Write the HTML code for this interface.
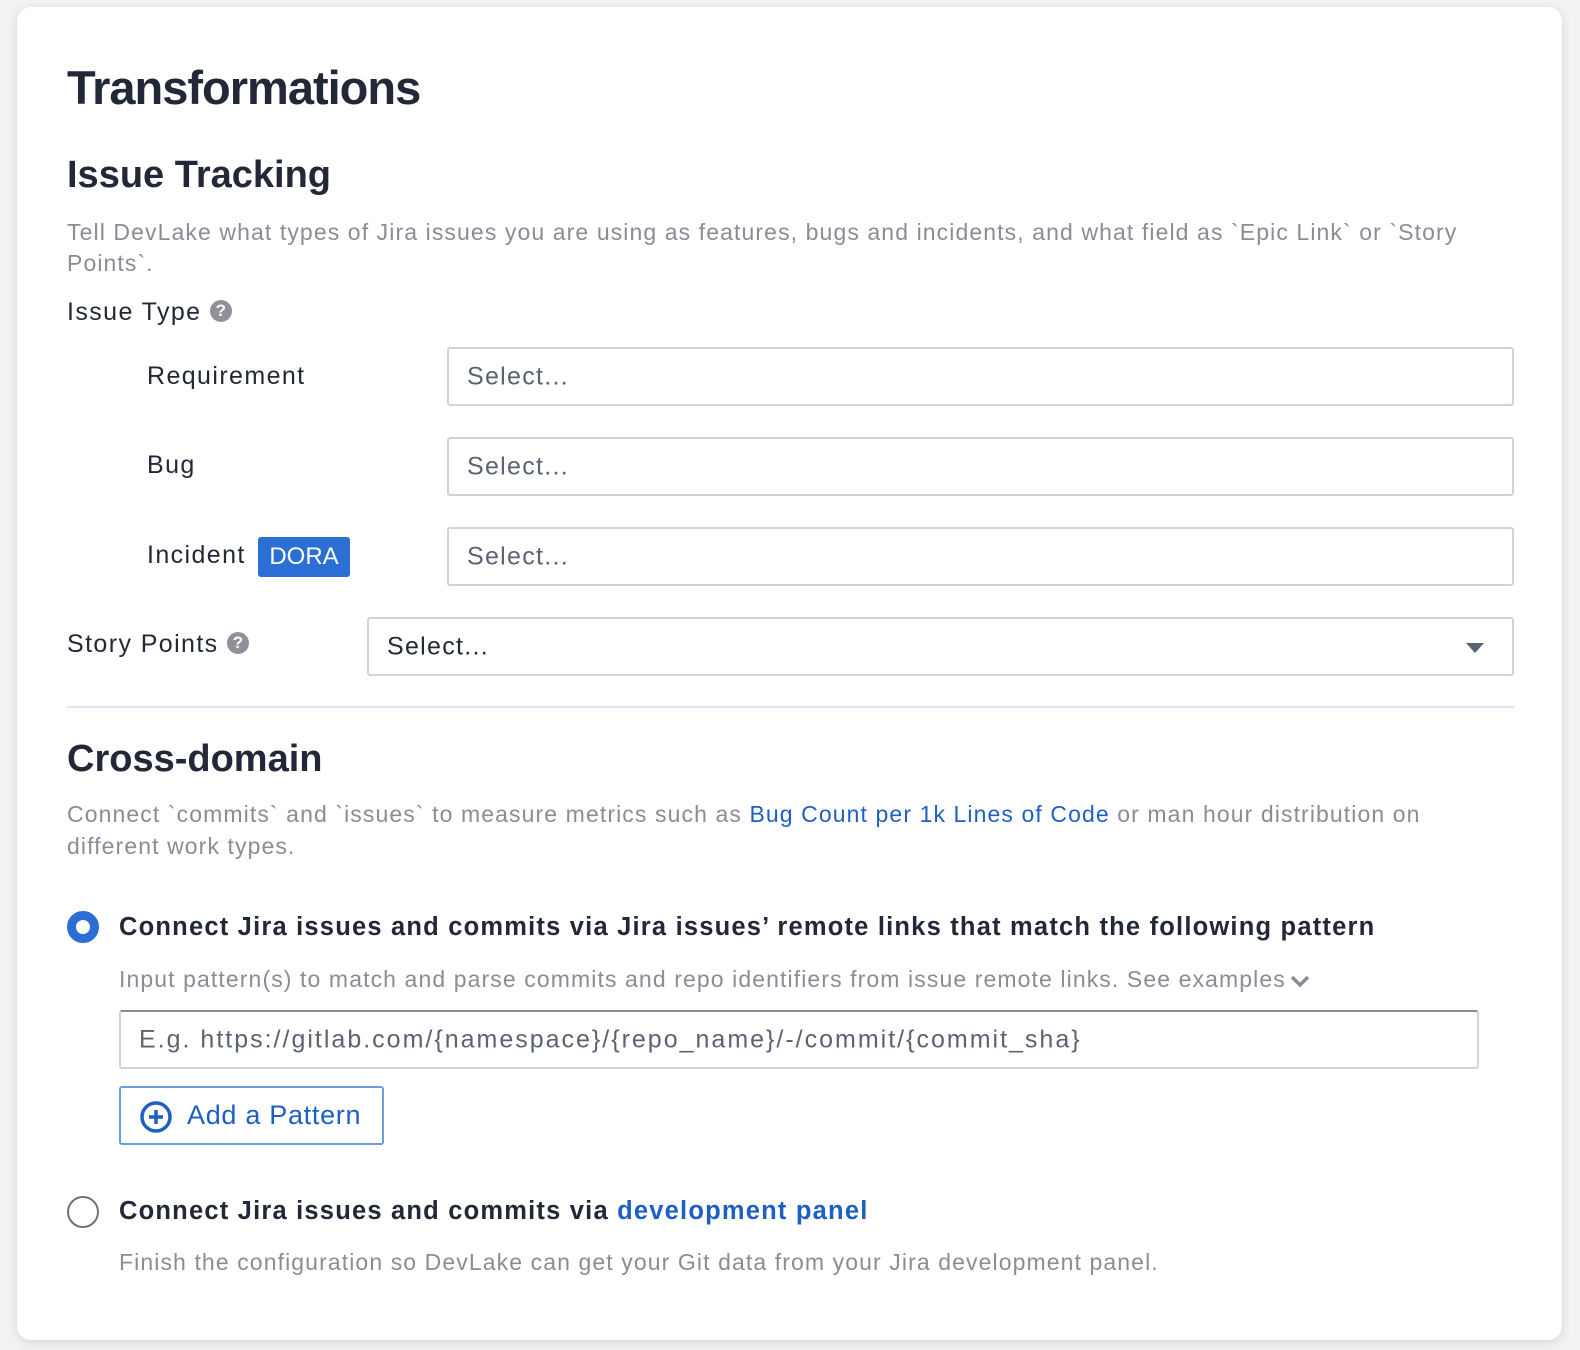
<!DOCTYPE html>
<html><head><meta charset="utf-8"><style>
*{margin:0;padding:0;box-sizing:border-box}
body{width:1580px;height:1350px;background:#f2f2f3;font-family:"Liberation Sans",Arial,sans-serif;position:relative;overflow:hidden}
.card{position:absolute;left:17px;top:7px;width:1545px;height:1333px;background:#fff;border-radius:14px;box-shadow:0 2px 10px rgba(0,0,0,.12)}
.a{position:absolute;white-space:nowrap}
.h1{font-size:47px;font-weight:bold;color:#232838;letter-spacing:-1px}
.h2{font-size:38px;font-weight:bold;color:#232838}
.g{font-size:23px;color:#8a8c96;letter-spacing:1.1px}
.lbl{font-size:25px;color:#232838;letter-spacing:1.4px}
.sel{position:absolute;border:2px solid #d3d3d3;border-radius:3px;background:#fff}
.sel span{position:absolute;left:18px;top:50%;transform:translateY(-50%);font-size:25px;color:#5b6272;letter-spacing:1.3px}
.q{display:inline-block;width:22px;height:22px;border-radius:50%;background:#8f9099;color:#fff;font-size:17px;font-weight:bold;text-align:center;line-height:22px;vertical-align:middle;letter-spacing:0}
.b{font-size:25.5px;font-weight:bold;color:#232838;letter-spacing:1.2px}
.link{color:#1e5fc4}
</style></head><body>
<div class="card"></div>
<div class="a h1" style="left:67px;top:60px">Transformations</div>
<div class="a h2" style="left:67px;top:154px">Issue Tracking</div>
<div class="a g" style="left:67px;top:217px;line-height:31px">Tell DevLake what types of Jira issues you are using as features, bugs and incidents, and what field as `Epic Link` or `Story<br>Points`.</div>
<div class="a lbl" style="left:67px;top:298px">Issue Type <span class="q" style="margin-top:-4px">?</span></div>
<div class="a lbl" style="left:147px;top:362px">Requirement</div>
<div class="sel" style="left:447px;top:347px;width:1067px;height:59px"><span>Select...</span></div>
<div class="a lbl" style="left:147px;top:451px">Bug</div>
<div class="sel" style="left:447px;top:437px;width:1067px;height:59px"><span>Select...</span></div>
<div class="a lbl" style="left:147px;top:541px">Incident</div>
<div class="a" style="left:258px;top:537px;width:92px;height:40px;background:#2c6fd4;border-radius:3px;color:#fff;font-size:24px;text-align:center;line-height:40px">DORA</div>
<div class="sel" style="left:447px;top:527px;width:1067px;height:59px"><span>Select...</span></div>
<div class="a lbl" style="left:67px;top:630px">Story Points <span class="q" style="margin-top:-4px">?</span></div>
<div class="sel" style="left:367px;top:617px;width:1147px;height:59px"><span style="color:#232838">Select...</span>
<div style="position:absolute;right:28px;top:24px;width:0;height:0;border-left:9px solid transparent;border-right:9px solid transparent;border-top:10px solid #5b6272"></div></div>
<div class="a" style="left:67px;top:706px;width:1447px;height:2px;background:#dce6fa"></div>
<div class="a h2" style="left:67px;top:738px">Cross-domain</div>
<div class="a g" style="left:67px;top:798px;line-height:32px">Connect `commits` and `issues` to measure metrics such as <span class="link">Bug Count per 1k Lines of Code</span> or man hour distribution on<br>different work types.</div>
<div class="a" style="left:67px;top:911px;width:32px;height:32px;border-radius:50%;border:9px solid #2c6fd4;background:#fff"></div>
<div class="a b" style="left:119px;top:913px">Connect Jira issues and commits via Jira issues’ remote links that match the following pattern</div>
<div class="a g" style="left:119px;top:966px">Input pattern(s) to match and parse commits and repo identifiers from issue remote links. See examples<svg width="24" height="16" viewBox="0 0 24 16" style="vertical-align:middle;margin-left:2px"><path d="M4 4l8 8 8-8" fill="none" stroke="#8a8c96" stroke-width="3.5"/></svg></div>
<div class="sel" style="left:119px;top:1010px;width:1360px;height:59px;border-top-color:#8d8d8d"><span style="letter-spacing:2px">E.g. https://gitlab.com/{namespace}/{repo_name}/-/commit/{commit_sha}</span></div>
<div class="a" style="left:119px;top:1086px;width:265px;height:59px;border:2px solid #6e9be0;border-radius:3px"></div>
<svg class="a" style="left:139px;top:1100px" width="34" height="34" viewBox="0 0 34 34"><circle cx="17" cy="17" r="14" fill="none" stroke="#1e5fc4" stroke-width="3.5"/><path d="M17 10v14M10 17h14" stroke="#1e5fc4" stroke-width="3.5"/></svg>
<div class="a link" style="left:187px;top:1100px;font-size:27px;letter-spacing:0.7px">Add a Pattern</div>
<div class="a" style="left:67px;top:1196px;width:32px;height:32px;border-radius:50%;border:2px solid #6b7280;background:#fff"></div>
<div class="a b" style="left:119px;top:1197px">Connect Jira issues and commits via <span class="link">development panel</span></div>
<div class="a g" style="left:119px;top:1249px">Finish the configuration so DevLake can get your Git data from your Jira development panel.</div>
</body></html>
